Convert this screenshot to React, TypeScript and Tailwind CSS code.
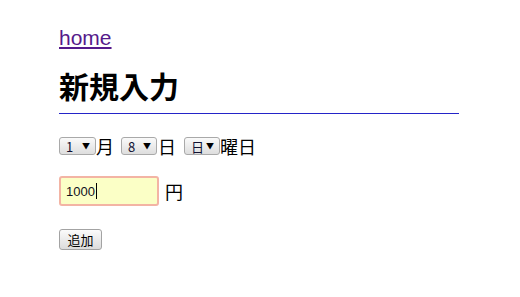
import React from "react";

const jp = { fontFamily: '"Noto Sans CJK JP", "Noto Sans", sans-serif' };

function Sel({ value, w }: { value: string; w: string }) {
  return (
    <div
      className={`relative flex h-[18px] items-center rounded-[3px] border border-[#a9a9a9] bg-gradient-to-b from-[#fafafa] to-[#dedede] pl-[6px] text-[13px] leading-none text-[#111133] ${w}`}
      style={jp}
    >
      <span>{value}</span>
      <span className="absolute right-[5px] top-[3px] text-[8px] leading-[10px] text-black">▼</span>
    </div>
  );
}

export default function App() {
  return (
    <div className="min-h-[297px] w-[520px] bg-white text-black" style={jp}>
      <div className="ml-[59px] w-[400px] pt-[26px]">
        <a
          href="#"
          className="block text-[21px] leading-[24px] text-[#551a8b] underline decoration-[2px] underline-offset-[2px]"
          style={{ fontFamily: '"Liberation Sans", Arial, sans-serif' }}
        >
          home
        </a>
        <h1 className="mt-[20px] border-b border-[#2424c8] pb-[13px] text-[30px] font-bold leading-[30px]">
          新規入力
        </h1>
        <div className="mt-[20px] flex h-[24px] items-center text-[18px] leading-none">
          <Sel value="1" w="w-[37px]" />
          <span className="w-[18px]">月</span>
          <div className="ml-[7px]">
            <Sel value="8" w="w-[36px]" />
          </div>
          <span className="ml-[1px] w-[18px]">日</span>
          <div className="ml-[8px]">
            <Sel value="日" w="w-[36px]" />
          </div>
          <span>曜日</span>
        </div>
        <div className="mt-[18px] flex h-[30px] items-center text-[18px] leading-none">
          <div
            className="flex h-[30px] w-[100px] items-center rounded-[3px] border-2 border-[#f3b4a4] bg-[#fbffc6] pl-[5px] text-[13px] text-[#111122]"
            style={{ fontFamily: '"Liberation Sans", Arial, sans-serif' }}
          >
            <span>1000</span>
            <span className="ml-[1px] h-[16px] w-px bg-black" />
          </div>
          <span className="ml-[6px]">円</span>
        </div>
        <div className="mt-[23px]">
          <button
            type="button"
            className="flex h-[21px] w-[43px] items-center justify-center rounded-[3px] border border-[#a3a3a3] bg-gradient-to-b from-[#fbfbfb] to-[#dcdcdc] text-[13px] leading-none text-black"
            style={jp}
          >
            追加
          </button>
        </div>
      </div>
    </div>
  );
}
